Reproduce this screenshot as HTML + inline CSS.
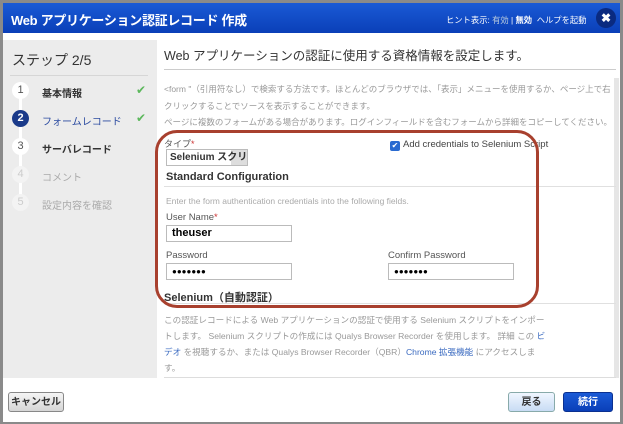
<!DOCTYPE html><html><head><style>
*{margin:0;padding:0;box-sizing:border-box}
body{width:623px;height:424px;background:#fff;font-family:"Liberation Sans","Noto Sans CJK JP",sans-serif;position:relative;overflow:hidden}
.a{position:absolute;white-space:nowrap}
.frame{left:0;top:0;width:623px;height:424px;border:3px solid #8a8a8a;border-bottom-width:2px}
.hdr{left:3px;top:3px;width:617px;height:30px;background:linear-gradient(#1a5ad6,#0a3fb8);color:#fff}
.side{left:3px;top:40px;width:154px;height:338px;background:#ececec}
.t{font-size:9px;color:#999}
.step{left:12px;width:17px;height:17px;border-radius:50%;background:#fff;font-size:11px;text-align:center;line-height:17px;color:#555}
.lab{left:42px;font-size:10px;font-weight:bold}
.chk{left:136px;color:#5cb85c;font-size:12px}
.inp{position:absolute;height:17px;border:1px solid #bbb;background:#fff;font-size:11px;font-weight:bold;padding-left:5px;line-height:15px;white-space:nowrap;overflow:hidden}
.btn{position:absolute;height:20px;border:1px solid #888;border-radius:3px;font-size:10px;text-align:center;line-height:19px;font-weight:bold;white-space:nowrap}
</style></head><body>
<div class="a frame"></div>
<div class="a hdr">
<div class="a" style="left:8px;top:7px;font-size:13px;font-weight:bold;letter-spacing:-0.3px">Web アプリケーション認証レコード 作成</div>
<div class="a" style="left:443px;top:11px;font-size:8.3px">ヒント表示: <span style="color:#bcd">有効</span> | <b>無効</b>&nbsp; ヘルプを起動</div>
<div class="a" style="left:593px;top:5px;width:20px;height:20px;border-radius:50%;background:#0a2a80;text-align:center;line-height:20px;font-size:12px;font-weight:bold">✖</div>
</div>
<div class="a side"></div>
<div class="a" style="left:12px;top:50px;font-size:14px;color:#333">ステップ 2/5</div>
<div class="a" style="left:10px;top:75px;width:138px;height:1px;background:#d6d6d6"></div>
<div class="a" style="left:19px;top:90px;width:3px;height:115px;background:#fff"></div>
<div class="a step" style="top:82px">1</div><div class="a lab" style="top:85px;color:#333">基本情報</div><div class="a chk" style="top:83px">✔</div>
<div class="a step" style="top:110px;background:#1a3a8a;color:#fff;font-weight:bold">2</div><div class="a lab" style="top:113px;color:#2a4aa0;font-weight:normal">フォームレコード</div><div class="a chk" style="top:111px">✔</div>
<div class="a step" style="top:138px">3</div><div class="a lab" style="top:141px;color:#333">サーバレコード</div>
<div class="a step" style="top:166px;color:#ccc;background:#f3f3f3">4</div><div class="a lab" style="top:169px;color:#aaa;font-weight:normal">コメント</div>
<div class="a step" style="top:194px;color:#ccc;background:#f3f3f3">5</div><div class="a lab" style="top:197px;color:#aaa;font-weight:normal">設定内容を確認</div>

<div class="a" style="left:164px;top:45px;font-size:12.5px;color:#333">Web アプリケーションの認証に使用する資格情報を設定します。</div>
<div class="a" style="left:164px;top:69px;width:452px;height:1px;background:#ccc"></div>
<div class="a" style="left:614px;top:78px;width:5px;height:300px;background:#e6e6e6"></div>
<div class="a t" style="left:164px;top:81px;font-size:8.5px;line-height:17px">&lt;form "（引用符なし）で検索する方法です。ほとんどのブラウザでは、「表示」メニューを使用するか、ページ上で右<br>クリックすることでソースを表示することができます。</div>
<div class="a t" style="left:164px;top:116px;font-size:8.5px">ページに複数のフォームがある場合があります。ログインフィールドを含むフォームから詳細をコピーしてください。</div>
<div class="a" style="left:164px;top:137px;font-size:9px;color:#555">タイプ<span style="color:#c33">*</span></div>
<div class="inp" style="left:166px;top:149px;width:82px;color:#333;padding-left:3px;font-size:10px;background:linear-gradient(90deg,#fff 80%,#ddd 80%)">Selenium スクリ <span style="font-size:8px">⌄</span></div>
<div class="a" style="left:390px;top:141px;width:10px;height:10px;background:#2a6ad0;border-radius:2px;color:#fff;font-size:8px;line-height:10px;text-align:center">✔</div>
<div class="a" style="left:403px;top:139px;font-size:9.5px;color:#444">Add credentials to Selenium Script</div>
<div class="a" style="left:166px;top:171px;font-size:11px;font-weight:bold;color:#333">Standard Configuration</div>
<div class="a" style="left:164px;top:186px;width:452px;height:1px;background:#e0e0e0"></div>
<div class="a t" style="left:166px;top:196px;font-size:8.5px;color:#aaa">Enter the form authentication credentials into the following fields.</div>
<div class="a" style="left:166px;top:212px;font-size:9.5px;color:#555">User Name<span style="color:#c33">*</span></div>
<div class="inp" style="left:166px;top:225px;width:126px">theuser</div>
<div class="a" style="left:166px;top:250px;font-size:9.5px;color:#555">Password</div>
<div class="inp" style="left:166px;top:263px;width:126px;font-size:8px">●●●●●●●</div>
<div class="a" style="left:388px;top:250px;font-size:9.5px;color:#555">Confirm Password</div>
<div class="inp" style="left:388px;top:263px;width:126px;font-size:8px">●●●●●●●</div>
<div class="a" style="left:164px;top:289px;font-size:11px;font-weight:bold;color:#333">Selenium（自動認証）</div>
<div class="a" style="left:164px;top:303px;width:452px;height:1px;background:#e0e0e0"></div>
<div class="a" style="left:155px;top:130px;width:384px;height:178px;border:3px solid #a8402e;border-radius:22px"></div>
<div class="a t" style="left:164px;top:312px;line-height:16px;font-size:8.6px">この認証レコードによる Web アプリケーションの認証で使用する Selenium スクリプトをインポー<br>トします。 Selenium スクリプトの作成には Qualys Browser Recorder を使用します。 詳細 この <span style="color:#3a6ac0">ビ</span><br><span style="color:#3a6ac0">デオ</span> を視聴するか、または Qualys Browser Recorder（QBR）<span style="color:#3a6ac0">Chrome 拡張機能</span> にアクセスしま<br>す。</div>
<div class="a" style="left:164px;top:377px;width:452px;height:1px;background:#ddd"></div>
<div class="btn" style="left:8px;top:392px;width:56px;background:linear-gradient(#f5f5f5,#d5d5d5);color:#333">キャンセル</div>
<div class="btn" style="left:508px;top:392px;width:47px;background:linear-gradient(#f0f6ff,#c8dcf4);color:#333;border-color:#8aa">戻る</div>
<div class="btn" style="left:563px;top:392px;width:50px;background:linear-gradient(#1a5ad6,#0a3fb8);color:#fff;border-color:#0a3090">続行</div>
</body></html>
